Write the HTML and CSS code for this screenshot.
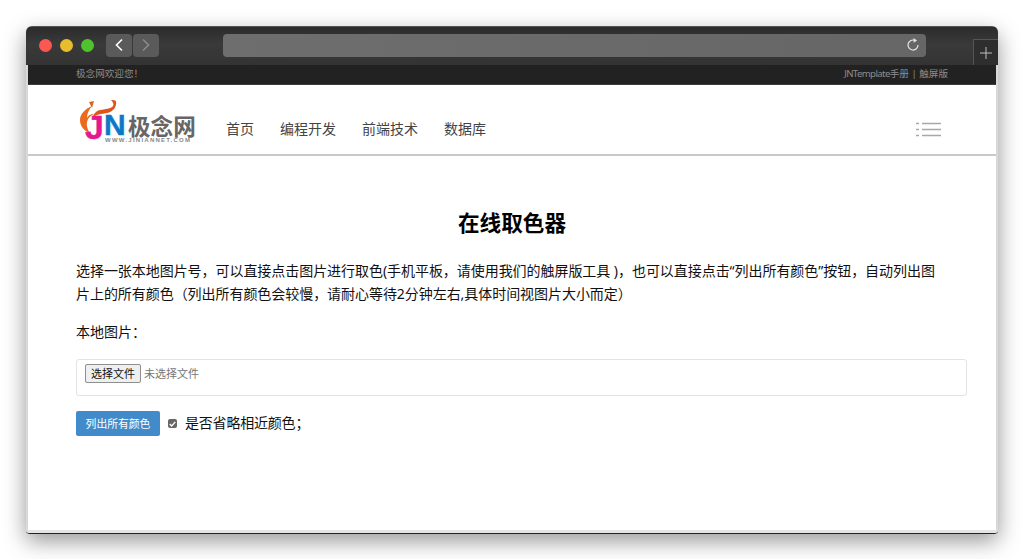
FILE: index.html
```html
<!DOCTYPE html>
<html lang="zh-CN">
<head>
<meta charset="utf-8">
<title>在线取色器</title>
<link rel="stylesheet" href="styles.css">
</head>
<body>
<div class="window">
  <div class="titlebar">
    <div class="lights">
      <span class="light red"></span>
      <span class="light yellow"></span>
      <span class="light green"></span>
    </div>
    <div class="navbtns">
      <span class="navbtn"><svg width="10" height="14" viewBox="0 0 10 14"><path d="M8 1.5 2.5 7 8 12.5" fill="none" stroke="#fff" stroke-width="1.6"/></svg></span>
      <span class="navbtn"><svg width="10" height="14" viewBox="0 0 10 14"><path d="M2 1.5 7.5 7 2 12.5" fill="none" stroke="#8a8a8a" stroke-width="1.6"/></svg></span>
    </div>
    <div class="urlbar">
      <svg width="14" height="14" viewBox="0 0 14 14"><path d="M8.6 2.3A5 5 0 1 0 12 7" fill="none" stroke="#e6e6e6" stroke-width="1.2"/><path d="M7.6 0 11 2.4 7.6 4.8z" fill="#e6e6e6"/></svg>
    </div>
    <div class="newtab"><svg width="12" height="12" viewBox="0 0 12 12"><path d="M6 0v12M0 6h12" stroke="#bdbdbd" stroke-width="1"/></svg></div>
  </div>
  <div class="viewport">
    <div class="topbar">
      <span>极念网欢迎您！</span>
      <span><span class="brand">JNTemplate</span>手册 | 触屏版</span>
    </div>
    <header class="header">
      <div class="logo">
        <svg class="flame" width="38" height="38" viewBox="0 0 38 38">
          <path d="M12 6C5 9 0 14 0 20c0 7 5 11 10 14-2-4-4-8-3-12 1-4 3-6 7-8-4 0-6 2-7 4 0-5 2-8 5-12z" fill="#ea6a1e"/>
          <path d="M13 18c2-4 9-4 14-5 6-1 10-6 9-12-1-1-3-1-5-1 2 2 3 4 2 6-2 3-8 3-13 4-4 1-7 4-7 8z" fill="#e0561a"/>
          <path d="M9 2l3 6 2-7z" fill="#d9641f"/>
        </svg>
        <span class="logo-j">J</span><span class="logo-n">N</span><span class="logo-cn">极念网</span>
        <span class="logo-url">WWW.JINIANNET.COM</span>
      </div>
      <nav class="nav">
        <a>首页</a><a>编程开发</a><a>前端技术</a><a>数据库</a>
      </nav>
      <svg class="menu" width="25" height="15" viewBox="0 0 25 15">
        <path d="M0 1.5h3M6 1.5h19M0 7.5h3M6 7.5h19M0 13.5h3M6 13.5h19" stroke="#a8a8a8" stroke-width="1.4"/>
      </svg>
    </header>
    <main class="content">
      <h1 class="title">在线取色器</h1>
      <p class="intro">选择一张本地图片号，可以直接点击图片进行取色(手机平板，请使用我们的触屏版工具 )，也可以直接点击“列出所有颜色”按钮，自动列出图片上的所有颜色（列出所有颜色会较慢，请耐心等待2分钟左右,具体时间视图片大小而定）</p>
      <div class="label">本地图片：</div>
      <div class="filebox">
        <span class="filebtn">选择文件</span><span class="filename">未选择文件</span>
      </div>
      <div class="actions">
        <span class="btn">列出所有颜色</span>
        <span class="check"><svg width="7" height="6" viewBox="0 0 7 6"><path d="M.7 3 2.7 5 6.3.8" fill="none" stroke="#fff" stroke-width="1.3"/></svg></span>
        <span class="checktext">是否省略相近颜色；</span>
      </div>
    </main>
  </div>
</div>
</body>
</html>
```

FILE: styles.css
```css
* { box-sizing: border-box; }
html, body { margin: 0; height: 100%; overflow: hidden; background: #fff; }
body {
  padding: 26px;
  font-family: "Noto Sans", "Noto Sans CJK SC", sans-serif;
  color: #111;
}
.window {
  height: 507px;
  display: flex;
  flex-direction: column;
  border-radius: 6px 6px 4px 4px;
  box-shadow: 0 1px 0 #222, 0 8px 22px rgba(0, 0, 0, .42);
  background: #fff;
  overflow: hidden;
}
.titlebar {
  height: 39px;
  flex: none;
  display: flex;
  align-items: center;
  background: linear-gradient(#2b2b2b, #3a3a3a 45%, #333);
  border-top: 1px solid #555;
  padding: 0 0 2px 13px;
}
.lights { display: flex; gap: 8px; margin-top: 1px; }
.light { width: 13px; height: 13px; border-radius: 50%; }
.red { background: #f95952; }
.yellow { background: #e8bd2b; }
.green { background: #4fc32e; }
.navbtns { display: flex; gap: 1px; margin-left: 12px; }
.navbtn {
  width: 26px; height: 23px;
  display: flex; align-items: center; justify-content: center;
  background: #5a5a5a;
  border-radius: 4px;
}
.urlbar {
  width: 703px; height: 23px;
  margin-left: 64px;
  display: flex; align-items: center; justify-content: flex-end;
  padding-right: 6px;
  background: linear-gradient(90deg, #6e6e6e, #666);
  border-radius: 4px;
}
.newtab {
  width: 25px; height: 26px;
  margin-left: auto;
  margin-bottom: -2px;
  align-self: flex-end;
  display: flex; align-items: center; justify-content: center;
  background: #2e2e2e;
  border: solid #555;
  border-width: 1px 0 0 1px;
}
.viewport {
  flex: 1;
  min-height: 0;
  background: #fff;
  border: solid #d8d8d8;
  border-width: 0 2px;
  border-bottom: 3px solid #e4e4e4;
}
.topbar {
  height: 20px;
  background: #222;
  border-bottom: 1px solid #3c3c3c;
  color: #8c8c8c;
  font-size: 9.6px;
  display: flex;
  justify-content: space-between;
  align-items: center;
  padding: 0 48px 4px;
}
.brand { letter-spacing: -.6px; }
.header {
  height: 71px;
  display: flex;
  align-items: flex-start;
  padding: 0 55px 0 52px;
  border-bottom: 2px solid #c8c8c8;
}
.logo {
  position: relative;
  width: 118px;
  height: 44px;
  flex: none;
  margin-top: 15px;
  font-family: "Liberation Sans", sans-serif;
}
.flame { position: absolute; left: 0; top: 0; }
.logo-j, .logo-n {
  position: absolute;
  font-weight: 700;
  -webkit-text-stroke: .4px currentColor;
}
.logo-j { left: 5px; top: 10px; font-size: 34px; line-height: 34px; color: #e5198f; }
.logo-n { left: 24px; top: 13px; font-size: 30px; line-height: 24px; color: #0c78c6; }
.logo-cn {
  position: absolute;
  left: 48px;
  top: 16px;
  font-family: "Noto Sans CJK SC", sans-serif;
  font-size: 22.6px;
  line-height: 20px;
  font-weight: 700;
  color: #666;
}
.logo-url {
  position: absolute;
  left: 25px;
  top: 37px;
  font-size: 6px;
  line-height: 6px;
  letter-spacing: 1.25px;
  font-weight: 700;
  color: #888;
  white-space: nowrap;
}
.nav { display: flex; gap: 26px; margin: 32px 0 0 28px; }
.nav a { font-size: 14px; line-height: 24px; color: #444; }
.menu { margin: 37px 0 0 auto; }
.content { padding: 0 29px 0 48px; }
.title {
  margin: 0 0 0 -19px;
  padding-top: 52px;
  text-align: center;
  font-size: 21.6px;
  line-height: 30px;
  font-weight: 700;
  color: #000;
}
.intro {
  margin: 21px 0 0;
  width: 864px;
  font-size: 14px;
  line-height: 23px;
  letter-spacing: -.05px;
}
.label { margin-top: 15px; font-size: 14px; line-height: 23px; }
.filebox {
  margin-top: 16px;
  height: 37px;
  padding: 4px 8px;
  display: flex;
  align-items: flex-start;
  border: 1px solid #e3e3e3;
  border-radius: 3px;
}
.filebtn {
  height: 19px;
  padding: 0 5px;
  font-size: 11px;
  line-height: 17px;
  color: #111;
  background: #efefef;
  border: 1px solid #8f8f8f;
  border-radius: 2px;
}
.filename { margin-left: 3px; font-size: 11px; line-height: 19px; color: #757575; }
.actions { margin-top: 15px; display: flex; align-items: center; }
.btn {
  width: 84px; height: 25px;
  text-align: center;
  font-size: 10.8px;
  line-height: 25px;
  color: #fff;
  background: #428bca;
  border-radius: 2px;
}
.check {
  width: 9px; height: 9px;
  margin-left: 8px;
  display: flex; align-items: center; justify-content: center;
  background: #666;
  border-radius: 2px;
}
.checktext { margin: 0 0 3px 8px; font-size: 14px; letter-spacing: -.2px; color: #111; }
```
